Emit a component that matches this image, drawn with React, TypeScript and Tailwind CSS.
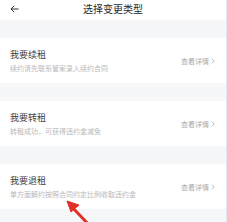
import React from "react";

const font = { fontFamily: '"Noto Sans CJK SC", "Noto Sans", sans-serif' };

function Card({ title, sub }: { title: string; sub: string }) {
  return (
    <div className="bg-white h-[45px] flex items-start justify-between pl-[10px] pr-[11px]">
      <div className="pt-[11px] flex flex-col">
        <div className="text-[9px] leading-[12px] text-[#3c3c3c]">{title}</div>
        <div className="text-[7px] leading-[10px] text-[#b8b8b8] mt-[2px]">{sub}</div>
      </div>
      <div className="self-center flex items-center gap-[2px] text-[7px] leading-[10px] text-[#a8a8a8]">
        <span>查看详情</span>
        <svg width="4" height="6" viewBox="0 0 4 6" fill="none">
          <path d="M0.8 0.6 L3.2 3 L0.8 5.4" stroke="#a8a8a8" strokeWidth="0.8" />
        </svg>
      </div>
    </div>
  );
}

export default function App() {
  return (
    <div style={font} className="relative w-[227px] h-[222px] bg-[#f6f7f9] overflow-hidden border-r border-[#e3e8f0]">
      <div className="bg-white h-[20px] relative flex items-center justify-center">
        <svg className="absolute left-[10px] top-[5px]" width="9" height="8" viewBox="0 0 9 8" fill="none">
          <path d="M8.5 4 H1 M4.2 0.8 L1 4 L4.2 7.2" stroke="#333" strokeWidth="1" />
        </svg>
        <span className="text-[10px] leading-[12px] text-[#2a2a2a] -mt-[2px]">选择变更类型</span>
      </div>
      <div className="flex flex-col gap-[18px] pt-[18px]">
        <Card title="我要续租" sub="续约请先联系管家录入续约合同" />
        <Card title="我要转租" sub="转租成功，可获得违约金减免" />
        <Card title="我要退租" sub="单方面解约按照合同约定比例收取违约金" />
      </div>
      <svg className="absolute left-[62px] top-[198px]" width="40" height="30" viewBox="0 0 40 30" fill="none">
        <path d="M28 28 L10 9" stroke="#e0302a" strokeWidth="3" strokeLinecap="round" />
        <path d="M5 3 L17 7 L9 14 Z" fill="#e0302a" stroke="#e0302a" strokeWidth="1" strokeLinejoin="round" />
      </svg>
    </div>
  );
}
